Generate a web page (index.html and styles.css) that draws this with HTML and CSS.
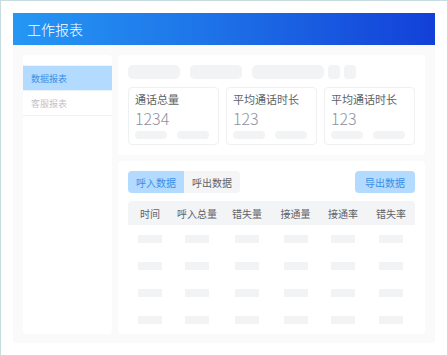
FILE: index.html
```html
<!DOCTYPE html>
<html lang="zh-CN">
<head>
  <meta charset="UTF-8">
  <title>工作报表</title>
  <link rel="stylesheet" href="styles.css">
</head>
<body>
  <div class="app">
    <header class="topbar">工作报表</header>

    <div class="content">
      <aside class="sidebar">
        <ul class="menu">
          <li class="menu-item active">数据报表</li>
          <li class="menu-item">客服报表</li>
        </ul>
      </aside>

      <main class="main">
        <section class="card summary">
          <div class="filters">
            <span class="pill w52"></span>
            <span class="pill w52"></span>
            <span class="pill w72"></span>
            <span class="pill w12 tight"></span>
            <span class="pill w12 tight"></span>
          </div>
          <div class="stats">
            <div class="stat">
              <div class="stat-label">通话总量</div>
              <div class="stat-value">1234</div>
              <div class="stat-bars"><span></span><span></span></div>
            </div>
            <div class="stat">
              <div class="stat-label">平均通话时长</div>
              <div class="stat-value">123</div>
              <div class="stat-bars"><span></span><span></span></div>
            </div>
            <div class="stat">
              <div class="stat-label">平均通话时长</div>
              <div class="stat-value">123</div>
              <div class="stat-bars"><span></span><span></span></div>
            </div>
          </div>
        </section>

        <section class="card records">
          <div class="toolbar">
            <div class="tabs">
              <button class="tab active">呼入数据</button>
              <button class="tab">呼出数据</button>
            </div>
            <button class="export">导出数据</button>
          </div>
          <div class="table">
            <div class="row head">
              <span>时间</span><span>呼入总量</span><span>错失量</span><span>接通量</span><span>接通率</span><span>错失率</span>
            </div>
            <div class="row">
              <i></i><i></i><i></i><i></i><i></i><i></i>
            </div>
            <div class="row">
              <i></i><i></i><i></i><i></i><i></i><i></i>
            </div>
            <div class="row">
              <i></i><i></i><i></i><i></i><i></i><i></i>
            </div>
            <div class="row">
              <i></i><i></i><i></i><i></i><i></i><i></i>
            </div>
          </div>
        </section>
      </main>
    </div>
  </div>
</body>
</html>
```

FILE: styles.css
```css
:root {
  --blue: #3a8ee6;
  --blue-light: #b3dbff;
  --skeleton: #f2f3f5;
  --text: #606266;
  --muted: #c0c4cc;
}

* { box-sizing: border-box; }

body {
  margin: 0;
  font-family: "Noto Sans CJK SC", "Noto Sans", sans-serif;
  color: var(--text);
}

.app {
  width: 448px;
  height: 356px;
  border: 1px solid #c6dce1;
  padding: 12px;
  background: #fff;
  display: flex;
  flex-direction: column;
}

.topbar {
  height: 32px;
  line-height: 32px;
  padding-left: 14px;
  font-size: 14px;
  font-weight: 300;
  color: #fff;
  background: linear-gradient(90deg, #2597f4 0%, #1e74e8 45%, #1340d8 100%);
}

.content {
  flex: 1;
  display: flex;
  gap: 6px;
  padding: 10px 10px 9px;
  background: #fafafa;
}

.sidebar {
  width: 89px;
  background: #fff;
  border-radius: 4px;
  padding-top: 10px;
}

.menu {
  list-style: none;
  margin: 0;
  padding: 0;
  border-top: 1px solid #f3f3f3;
}

.menu-item {
  height: 25px;
  line-height: 25px;
  padding-left: 8px;
  font-size: 9px;
  color: var(--muted);
  border-bottom: 1px solid #f0f0f0;
}

.menu-item.active {
  background: var(--blue-light);
  color: var(--blue);
  border-bottom-color: #e8f3ff;
}

.main {
  flex: 1;
  display: flex;
  flex-direction: column;
  gap: 6px;
}

.card {
  background: #fff;
  border-radius: 4px;
  padding: 10px;
}

.filters {
  display: flex;
  gap: 10px;
  height: 14px;
}

.pill {
  display: block;
  height: 14px;
  background: var(--skeleton);
  border-radius: 5px;
}

.pill.tight { margin-left: -6px; }
.w52 { width: 52px; }
.w72 { width: 72px; }
.w12 { width: 12px; border-radius: 4px; }

.stats {
  display: flex;
  gap: 7px;
  margin-top: 8px;
}

.stat {
  flex: 1;
  height: 58px;
  border: 1px solid #eef0f2;
  border-radius: 4px;
  padding: 4px 6px 0;
}

.stat-label {
  font-size: 11px;
  line-height: 14px;
  color: var(--text);
}

.stat-value {
  margin-top: 3px;
  font-size: 16px;
  line-height: 18px;
  font-weight: 300;
  color: #8a93a5;
}

.stat-bars {
  display: flex;
  gap: 10px;
  margin-top: 4px;
}

.stat-bars span {
  width: 32px;
  height: 8px;
  border-radius: 4px;
  background: var(--skeleton);
}

.records {
  flex: 1;
  padding-bottom: 0;
  overflow: hidden;
}

.toolbar {
  display: flex;
  justify-content: space-between;
  height: 22px;
}

.tabs {
  display: flex;
  border-radius: 4px;
  overflow: hidden;
}

button {
  font-family: inherit;
  border: none;
  cursor: pointer;
}

.tab {
  height: 22px;
  padding: 0 8px;
  font-size: 10px;
  background: #f4f5f7;
  color: var(--text);
}

.tab.active {
  background: var(--blue-light);
  color: var(--blue);
}

.export {
  height: 22px;
  padding: 0 10px;
  font-size: 10px;
  border-radius: 4px;
  background: var(--blue-light);
  color: var(--blue);
}

.table {
  margin-top: 8px;
}

.row {
  display: grid;
  grid-template-columns: 44px 50px 50px 47px 48px 48px;
  height: 27px;
  align-items: center;
  justify-items: center;
}

.row.head {
  height: 24px;
  background: #f3f4f6;
  border-radius: 4px 4px 0 0;
  font-size: 10px;
  color: var(--text);
}

.row i {
  display: block;
  width: 24px;
  height: 8px;
  background: var(--skeleton);
}
```
